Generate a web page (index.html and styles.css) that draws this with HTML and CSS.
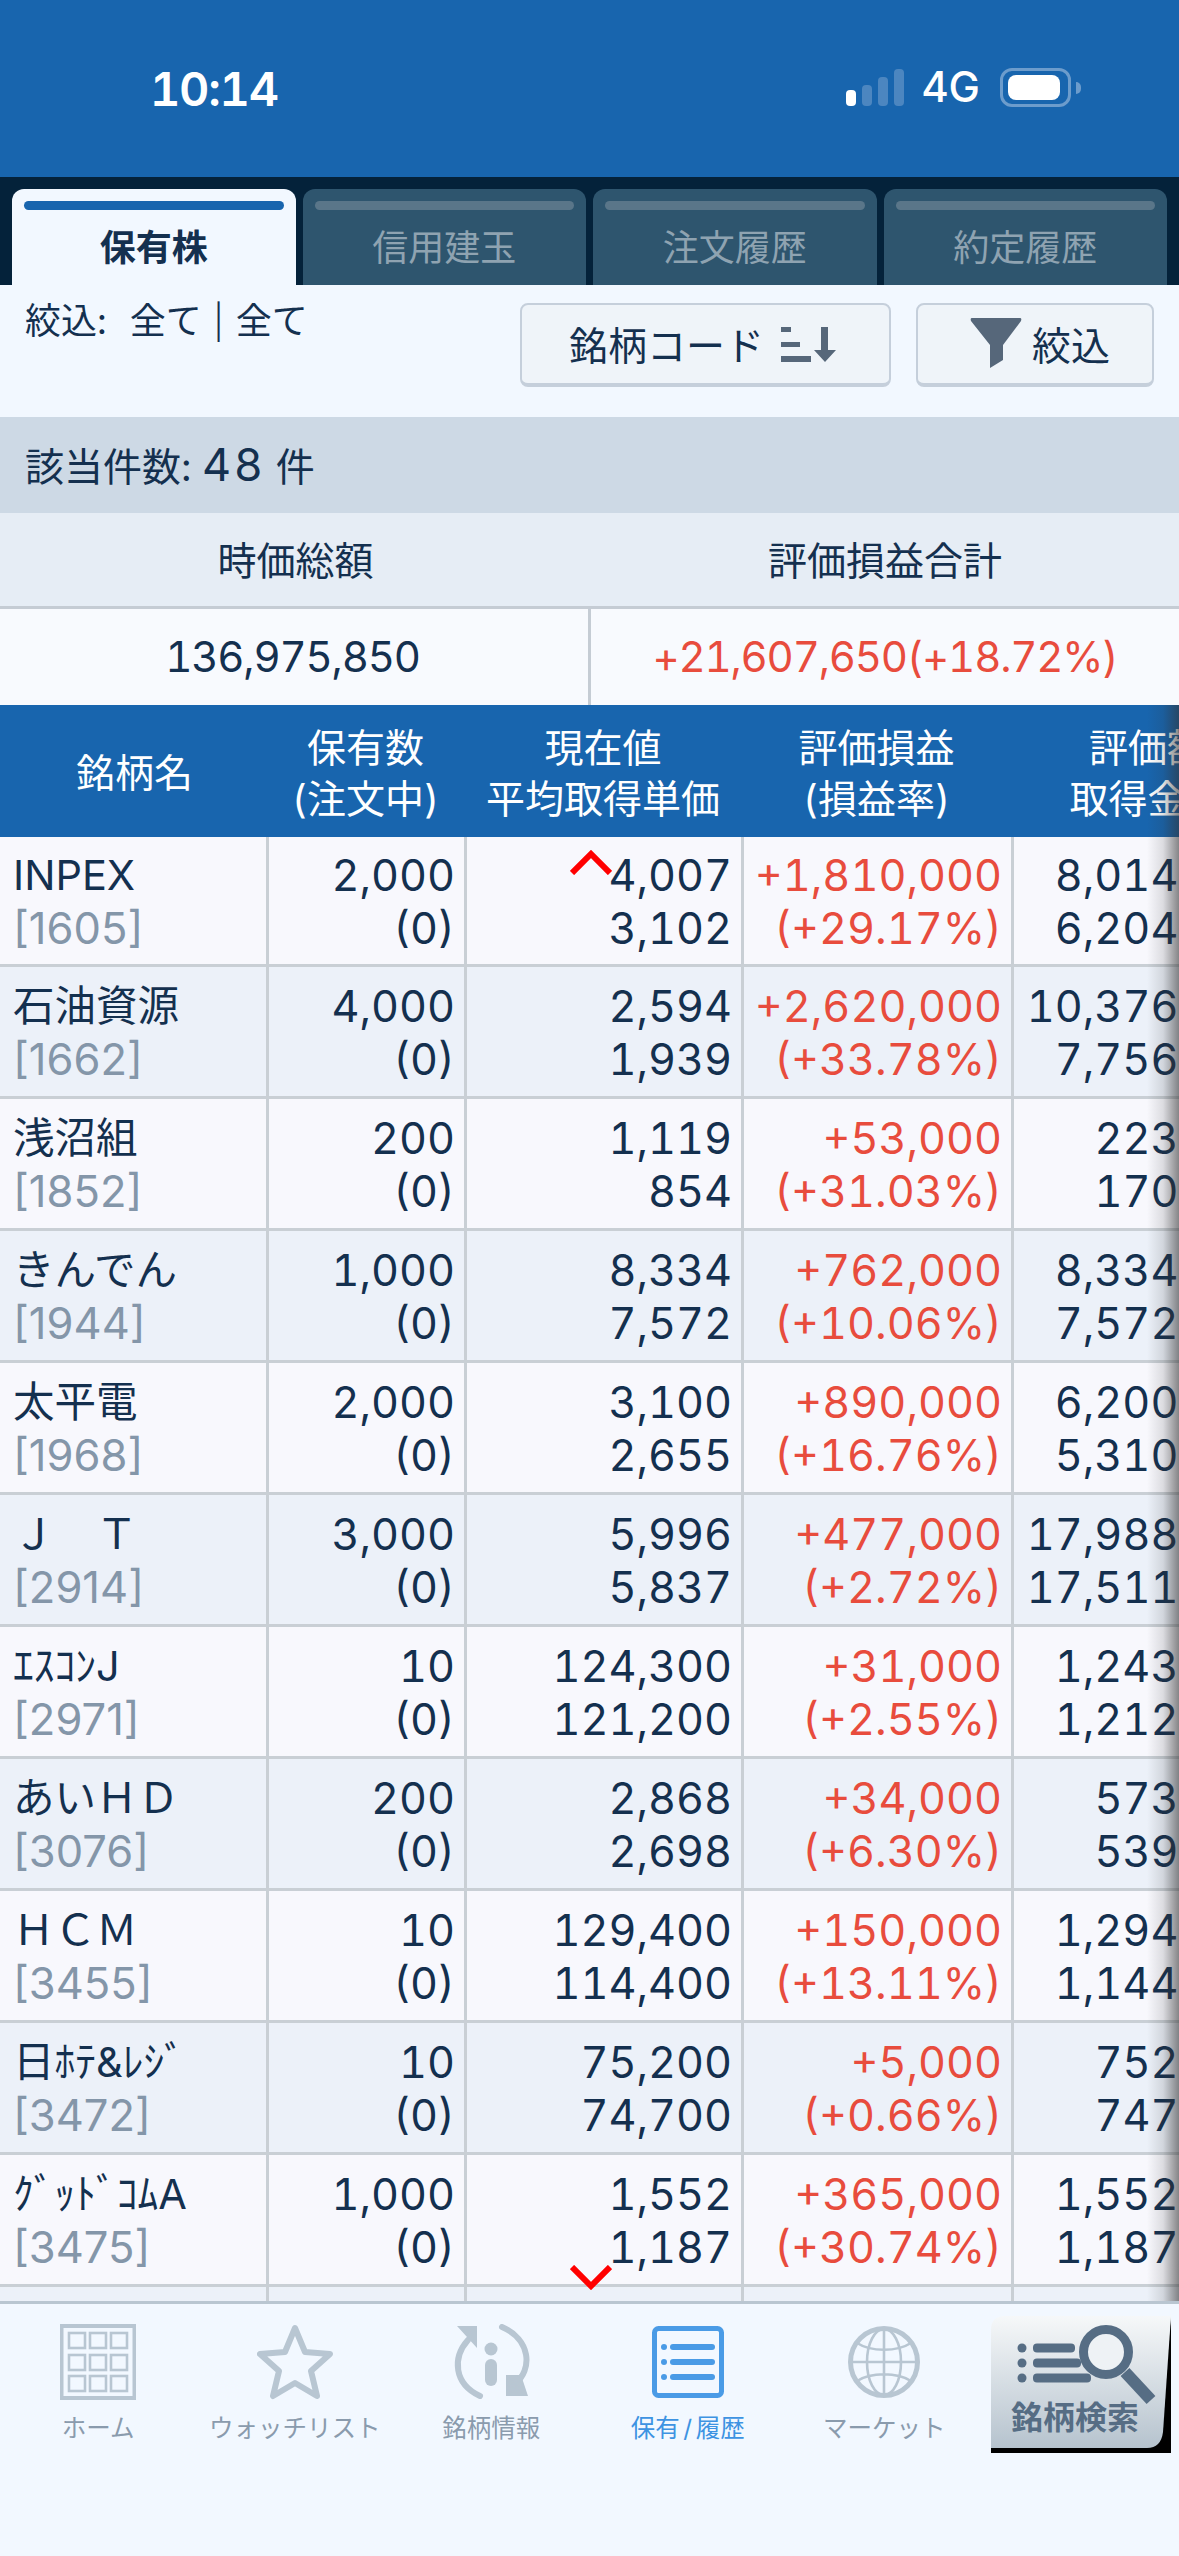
FILE: index.html
```html
<!DOCTYPE html>
<html lang="ja">
<head>
    <meta charset="UTF-8">
    <meta name="viewport" content="width=device-width, initial-scale=1.0">
    <title>保有株</title>
    <link rel="stylesheet" href="styles.css">
</head>
<body>
    <div class="status-bar">
        <span class="time">10:14</span>
        <div class="status-right">
            <div class="signal">
                <i class="s1"></i><i class="s2"></i><i class="s3"></i><i class="s4"></i>
            </div>
            <span class="net">4G</span>
            <div class="battery"><i></i></div>
            <div class="battery-cap"></div>
        </div>
    </div>

    <div class="tabs">
        <div class="tab active"><i></i><span>保有株</span></div>
        <div class="tab"><i></i><span>信用建玉</span></div>
        <div class="tab"><i></i><span>注文履歴</span></div>
        <div class="tab"><i></i><span>約定履歴</span></div>
    </div>

    <div class="filter-row">
        <div class="filter-text">絞込:<span class="filter-val">全て <span class="pipe">|</span> 全て</span></div>
        <button class="btn btn-sort">銘柄コード
            <svg width="55" height="35" viewBox="0 0 55 35">
                <path fill="#56677a" d="M0 0h10v5H0zM0 15h19v5H0zM0 29h30v6H0zM40 0h7v23h8L44 35 33 23h7z"/>
            </svg>
        </button>
        <button class="btn btn-filter">
            <svg width="52" height="50" viewBox="0 0 52 50">
                <path fill="#56677a" d="M2 0h48q2 0 1 3L33 27v15l-13 8V27L1 3Q0 0 2 0z"/>
            </svg>
            絞込
        </button>
    </div>

    <div class="count-row">該当件数: <span class="count-num">48</span> 件</div>

    <div class="summary-head">
        <div>時価総額</div>
        <div>評価損益合計</div>
    </div>
    <div class="summary-vals">
        <div>136,975,850</div>
        <div class="red">+21,607,650(+18.72%)</div>
    </div>

    <div class="table-wrap">
        <table class="stocks">
            <thead>
                <tr>
                    <th>銘柄名</th>
                    <th>保有数<br>(注文中)</th>
                    <th>現在値<br>平均取得単価</th>
                    <th>評価損益<br>(損益率)</th>
                    <th>評価額<br>取得金額</th>
                </tr>
            </thead>
            <tbody>
                <tr class="first">
                    <td class="name">INPEX<br><span class="code">[1605]</span></td>
                    <td>2,000<br>(0)</td>
                    <td>4,007<br>3,102</td>
                    <td class="red">+1,810,000<br>(+29.17%)</td>
                    <td>8,014,000<br>6,204,000</td>
                </tr>
                <tr>
                    <td class="name">石油資源<br><span class="code">[1662]</span></td>
                    <td>4,000<br>(0)</td>
                    <td>2,594<br>1,939</td>
                    <td class="red">+2,620,000<br>(+33.78%)</td>
                    <td>10,376,000<br>7,756,000</td>
                </tr>
                <tr>
                    <td class="name">浅沼組<br><span class="code">[1852]</span></td>
                    <td>200<br>(0)</td>
                    <td>1,119<br>854</td>
                    <td class="red">+53,000<br>(+31.03%)</td>
                    <td>223,800<br>170,800</td>
                </tr>
                <tr>
                    <td class="name">きんでん<br><span class="code">[1944]</span></td>
                    <td>1,000<br>(0)</td>
                    <td>8,334<br>7,572</td>
                    <td class="red">+762,000<br>(+10.06%)</td>
                    <td>8,334,000<br>7,572,000</td>
                </tr>
                <tr>
                    <td class="name">太平電<br><span class="code">[1968]</span></td>
                    <td>2,000<br>(0)</td>
                    <td>3,100<br>2,655</td>
                    <td class="red">+890,000<br>(+16.76%)</td>
                    <td>6,200,000<br>5,310,000</td>
                </tr>
                <tr>
                    <td class="name">Ｊ　Ｔ<br><span class="code">[2914]</span></td>
                    <td>3,000<br>(0)</td>
                    <td>5,996<br>5,837</td>
                    <td class="red">+477,000<br>(+2.72%)</td>
                    <td>17,988,000<br>17,511,000</td>
                </tr>
                <tr>
                    <td class="name">ｴｽｺﾝJ<br><span class="code">[2971]</span></td>
                    <td>10<br>(0)</td>
                    <td>124,300<br>121,200</td>
                    <td class="red">+31,000<br>(+2.55%)</td>
                    <td>1,243,000<br>1,212,000</td>
                </tr>
                <tr>
                    <td class="name">あいＨＤ<br><span class="code">[3076]</span></td>
                    <td>200<br>(0)</td>
                    <td>2,868<br>2,698</td>
                    <td class="red">+34,000<br>(+6.30%)</td>
                    <td>573,600<br>539,600</td>
                </tr>
                <tr>
                    <td class="name">ＨＣＭ<br><span class="code">[3455]</span></td>
                    <td>10<br>(0)</td>
                    <td>129,400<br>114,400</td>
                    <td class="red">+150,000<br>(+13.11%)</td>
                    <td>1,294,000<br>1,144,000</td>
                </tr>
                <tr>
                    <td class="name">日ﾎﾃ&amp;ﾚｼﾞ<br><span class="code">[3472]</span></td>
                    <td>10<br>(0)</td>
                    <td>75,200<br>74,700</td>
                    <td class="red">+5,000<br>(+0.66%)</td>
                    <td>752,000<br>747,000</td>
                </tr>
                <tr>
                    <td class="name">ｸﾞｯﾄﾞｺﾑA<br><span class="code">[3475]</span></td>
                    <td>1,000<br>(0)</td>
                    <td>1,552<br>1,187</td>
                    <td class="red">+365,000<br>(+30.74%)</td>
                    <td>1,552,000<br>1,187,000</td>
                </tr>
                <tr class="stub">
                    <td></td><td></td><td></td><td></td><td></td>
                </tr>
            </tbody>
        </table>

        <svg class="chevron chevron-up" width="42" height="25" viewBox="0 0 42 25">
            <path d="M2 23L21 4l19 19" fill="none" stroke="#f00" stroke-width="6"/>
        </svg>
        <svg class="chevron chevron-down" width="42" height="25" viewBox="0 0 42 25">
            <path d="M2 2l19 19L40 2" fill="none" stroke="#f00" stroke-width="6"/>
        </svg>
        <div class="edge-shadow"></div>
    </div>

    <nav class="nav">
        <div class="nav-item">
            <svg width="76" height="76" viewBox="0 0 76 76" fill="none" stroke="#b8c6d2">
                <rect x="1.5" y="2" width="73" height="72" stroke-width="4"/>
                <g stroke-width="2.6">
                    <rect x="9" y="9" width="16" height="15"/><rect x="30" y="9" width="16" height="15"/><rect x="51" y="9" width="16" height="15"/>
                    <rect x="9" y="31" width="16" height="15"/><rect x="30" y="31" width="16" height="15"/><rect x="51" y="31" width="16" height="15"/>
                    <rect x="9" y="52" width="16" height="15"/><rect x="30" y="52" width="16" height="15"/><rect x="51" y="52" width="16" height="15"/>
                </g>
            </svg>
            <span>ホーム</span>
        </div>
        <div class="nav-item">
            <svg width="76" height="76" viewBox="0 0 76 76">
                <path d="M38 4l10 24 25 2-19 17 6 25-22-13-22 13 6-25L3 30l25-2z" fill="none" stroke="#b8c6d2" stroke-width="6" stroke-linejoin="round"/>
            </svg>
            <span>ウォッチリスト</span>
        </div>
        <div class="nav-item">
            <svg width="78" height="76" viewBox="0 0 78 76">
                <g fill="none" stroke="#b8c6d2" stroke-width="6" stroke-linecap="round">
                    <path d="M16 16C0 34 2 60 28 72"/>
                    <path d="M50 3c28 12 32 42 12 58"/>
                </g>
                <path fill="#b8c6d2" d="M5 2h20v22zM54 51l15 0 7 21H54z"/>
                <circle cx="39" cy="25" r="6.5" fill="#b8c6d2"/>
                <rect x="33" y="35" width="12" height="27" rx="6" fill="#b8c6d2"/>
            </svg>
            <span>銘柄情報</span>
        </div>
        <div class="nav-item active">
            <svg width="72" height="76" viewBox="0 0 72 76">
                <rect x="2.500" y="4.500" width="67" height="67" rx="4" fill="none" stroke="#4a9be6" stroke-width="5"/>
                <g fill="#4a9be6">
                    <circle cx="12" cy="23" r="3"/><circle cx="12" cy="38" r="3"/><circle cx="12" cy="53" r="3"/>
                    <rect x="18" y="20" width="45" height="6" rx="3"/><rect x="18" y="35" width="45" height="6" rx="3"/><rect x="18" y="50" width="45" height="6" rx="3"/>
                </g>
            </svg>
            <span class="tight">保有 / 履歴</span>
        </div>
        <div class="nav-item">
            <svg width="72" height="76" viewBox="0 0 72 76" fill="none" stroke="#b8c6d2" stroke-width="2.600">
                <ellipse cx="36" cy="38" rx="33.500" ry="33.500" stroke-width="5"/>
                <ellipse cx="36" cy="38" rx="17" ry="33"/>
                <path d="M36 5v66M3 38h66M9 19c14 9 40 9 54 0M9 57c14-9 40-9 54 0"/>
            </svg>
            <span>マーケット</span>
        </div>
        <div class="nav-item search">
            <svg width="180" height="137" viewBox="0 0 180 137">
                <defs>
                    <linearGradient id="btnFill" x1="0" y1="0" x2="0" y2="1">
                        <stop offset="0" stop-color="#f6f8f9"/>
                        <stop offset="1" stop-color="#b6c3ce"/>
                    </linearGradient>
                </defs>
                <path fill="#000" d="M180 0V137H0V130L170 100z"/>
                <path fill="url(#btnFill)" d="M14 0H180L172 116Q170 132 156 132H0V14Q0 0 14 0z"/>
                <g fill="#566d84">
                    <circle cx="31" cy="32" r="4.500"/><circle cx="31" cy="47" r="4.500"/><circle cx="31" cy="62" r="4.500"/>
                    <rect x="42" y="27.500" width="42" height="9" rx="4"/><rect x="42" y="42.500" width="48" height="9" rx="4"/><rect x="42" y="57.500" width="58" height="9" rx="4"/>
                </g>
                <circle cx="115" cy="36" r="26" fill="#eef2f5"/>
                <circle cx="115" cy="36" r="22.500" fill="none" stroke="#566d84" stroke-width="9"/>
                <path d="M134 56l26 28" stroke="#566d84" stroke-width="12"/>
                <text x="84" y="113" text-anchor="middle" class="search-label">銘柄検索</text>
            </svg>
        </div>
    </nav>
</body>
</html>
```

FILE: styles.css
```css
* {
    box-sizing: border-box;
}

body {
    margin: 0;
    width: 1179px;
    height: 2556px;
    overflow: hidden;
    background: #f2f8ff;
    color: #14304f;
    font-family: Inter, "Noto Sans CJK JP", sans-serif;
    font-size: 39px;
    font-variant-numeric: tabular-nums;
}

.red {
    color: #e84c3d;
}

/* status bar */
.status-bar {
    height: 177px;
    background: #1865ae;
    color: white;
    display: flex;
    justify-content: space-between;
    padding: 63px 98px 0 150px;
}

.time {
    font-size: 47px;
    font-weight: 600;
    line-height: 52px;
    letter-spacing: -1.3px;
}

.status-right {
    display: flex;
    align-items: flex-start;
    height: 45px;
    margin-top: -1px;
}

.signal {
    display: flex;
    align-items: flex-end;
    gap: 6px;
    height: 37px;
    margin-top: 7px;
}

.signal i {
    width: 10px;
    border-radius: 4px;
    background: #4c86c0;
}

.signal .s1 {
    height: 16px;
    background: white;
}

.signal .s2 {
    height: 21px;
}

.signal .s3 {
    height: 29px;
}

.signal .s4 {
    height: 37px;
}

.net {
    margin-left: 17px;
    font-size: 42px;
    font-weight: 500;
    line-height: 50px;
}

.battery {
    width: 71px;
    height: 39px;
    margin: 6px 0 0 20px;
    padding: 4px 5px;
    border: 3px solid #6c9ccc;
    border-radius: 12px;
}

.battery i {
    display: block;
    width: 52px;
    height: 25px;
    background: white;
    border-radius: 8px;
}

.battery-cap {
    width: 5px;
    height: 12px;
    margin: 20px 0 0 5px;
    background: #6c9ccc;
    border-radius: 0 6px 6px 0;
}

/* tabs */
.tabs {
    height: 108px;
    padding: 12px 12px 0;
    background: #04223a;
    display: flex;
    gap: 7px;
}

.tab {
    flex: 1;
    padding: 12px 12px 0;
    background: #2e556e;
    color: #8fa3b1;
    font-size: 36px;
    text-align: center;
    border-radius: 12px 12px 0 0;
}

.tab i {
    display: block;
    height: 9px;
    background: #5a7689;
    border-radius: 5px;
}

.tab span {
    display: block;
    margin-top: 12px;
    line-height: 52px;
}

.tab.active {
    background: #f2f8ff;
    color: #14304f;
    font-weight: 700;
}

.tab.active i {
    background: #1865ae;
}

/* filter row */
.filter-row {
    height: 132px;
    display: flex;
    align-items: flex-start;
    padding: 18px 25px 0 25px;
}

.filter-text {
    flex: 1;
    font-size: 36px;
    line-height: 36px;
}

.filter-val {
    margin-left: 23px;
    word-spacing: 2px;
}

.pipe {
    font-family: Inter, sans-serif;
    font-size: 34px;
    font-weight: 300;
}

.btn {
    height: 84px;
    background: #eff4f9;
    color: #14304f;
    border: 2px solid #c5cfdb;
    border-bottom-width: 4px;
    border-radius: 8px;
    font-family: inherit;
    font-size: 39px;
    display: flex;
    align-items: center;
    justify-content: center;
    gap: 17px;
    padding: 0 0 3px;
}

.btn-sort {
    width: 371px;
    padding-right: 6px;
}

.btn-sort svg {
    margin-top: 3px;
}

.btn-filter {
    width: 238px;
    margin-left: 25px;
    gap: 10px;
    padding-left: 10px;
}

.count-row {
    height: 96px;
    padding-left: 25px;
    background: #cdd9e5;
    line-height: 96px;
}

.count-num {
    font-size: 45px;
    letter-spacing: 2.500px;
}

/* summary */
.summary-head {
    height: 96px;
    display: grid;
    grid-template-columns: 591px 588px;
    background: #e6edf5;
    border-bottom: 3px solid #c5ccd4;
    text-align: center;
    line-height: 96px;
}

.summary-vals {
    height: 96px;
    display: grid;
    grid-template-columns: 591px 588px;
    background: #f8fafe;
    font-size: 42px;
    letter-spacing: -1.2px;
    text-align: center;
    line-height: 96px;
}

.summary-vals div:first-child {
    padding-right: 3px;
    border-right: 3px solid #c5ccd4;
}

/* table */
.table-wrap {
    position: relative;
    height: 1596px;
    overflow: hidden;
}

.stocks {
    width: 1286px;
    table-layout: fixed;
    border-collapse: separate;
    border-spacing: 0;
}

.stocks th {
    height: 132px;
    padding: 3px 5px 0 0;
    background: #1865ae;
    color: white;
    font-weight: 400;
    line-height: 51px;
}

.stocks th:first-child {
    padding-right: 0;
}

.stocks th:nth-child(1), .stocks td:nth-child(1) {
    width: 269px;
}

.stocks th:nth-child(2), .stocks td:nth-child(2) {
    width: 198px;
}

.stocks th:nth-child(3), .stocks td:nth-child(3) {
    width: 277px;
}

.stocks th:nth-child(4), .stocks td:nth-child(4) {
    width: 270px;
}

.stocks td {
    height: 132px;
    padding: 2px 9px 0 0;
    font-size: 43.200px;
    line-height: 53px;
    text-align: right;
    background: #f8f8fd;
    border-right: 3px solid #c9cfd5;
    border-bottom: 3px solid #c9cfd5;
    white-space: nowrap;
}

.stocks tr:nth-child(even) td {
    background: #ecf1f9;
}

.stocks tr.first td {
    height: 130px;
}

.stocks tr.stub td {
    height: 14px;
    padding: 0;
    border-bottom: 0;
}

.stocks td.name {
    padding: 3px 0 0 13px;
    font-size: 41.500px;
    text-align: left;
}

.code {
    color: #8496a9;
    font-size: 43.500px;
    font-variant-numeric: normal;
}

.chevron {
    position: absolute;
    left: 570px;
}

.chevron-up {
    top: 145px;
}

.chevron-down {
    top: 1560px;
}

.edge-shadow {
    position: absolute;
    top: 0;
    right: 0;
    bottom: 0;
    width: 32px;
    background: linear-gradient(to right, rgba(50, 50, 50, 0), rgba(50, 50, 50, 0.14) 50%, rgba(50, 50, 50, 0.58));
}

/* bottom nav */
.nav {
    height: 255px;
    border-top: 3px solid #b9c6d1;
    display: grid;
    grid-template-columns: repeat(6, 196.5px);
    padding-top: 20px;
    background: #f2f8ff;
}

.nav-item {
    display: flex;
    flex-direction: column;
    align-items: center;
    color: #8a9bad;
    font-size: 24.500px;
    line-height: 30px;
}

.nav-item svg {
    display: block;
    margin-bottom: 13px;
}

.nav-item.active {
    color: #3d93e2;
}

.tight {
    word-spacing: -3px;
}

.nav-item.search {
    margin-top: -8px;
}

.search-label {
    fill: #566d84;
    font-size: 32px;
    font-weight: 700;
}
```
